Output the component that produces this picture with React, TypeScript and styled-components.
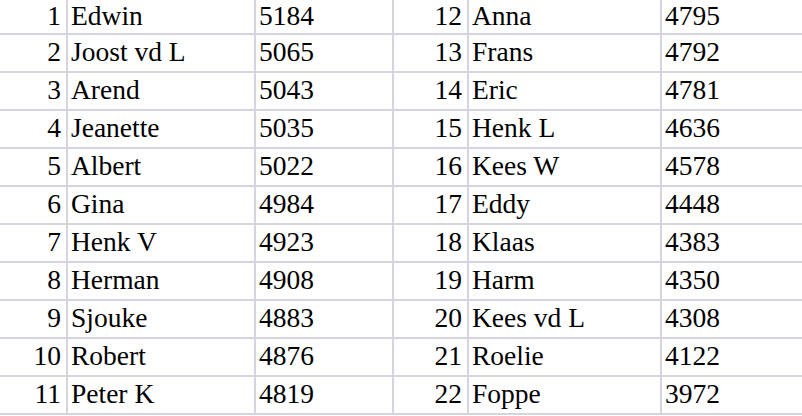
import React from "react";
import styled, { createGlobalStyle } from "styled-components";

const Global = createGlobalStyle`
  html, body { margin: 0; padding: 0; background: #ffffff; overflow: hidden; }
  body { font-family: "Liberation Serif", "Times New Roman", serif; color: #000; }
`;

const Sheet = styled.div`
  width: 802px;
  height: 416px;
  overflow: hidden;
  background: #fff;
`;

const Table = styled.div`
  display: flex;
  flex-direction: column;
`;

const Row = styled.div<{ $first?: boolean }>`
  display: grid;
  grid-template-columns: 68px 188px 138px 75px 193px 140px;
  height: ${(p) => (p.$first ? "35px" : "38px")};
`;

const Cell = styled.div<{ $align?: "left" | "right"; $last?: boolean; $first?: boolean }>`
  box-sizing: border-box;
  height: ${(p) => (p.$first ? "35px" : "38px")};
  border-bottom: 2px solid #d5d4df;
  border-right: ${(p) => (p.$last ? "none" : "2px solid #d5d4df")};
  font-size: 27.5px;
  line-height: ${(p) => (p.$first ? "32px" : "34px")};
  white-space: nowrap;
  text-align: ${(p) => (p.$align === "right" ? "right" : "left")};
  padding: ${(p) => (p.$align === "right" ? "0 5px 0 0" : "0 0 0 3px")};
`;

const left: [number, string, number][] = [
  [1, "Edwin", 5184],
  [2, "Joost vd L", 5065],
  [3, "Arend", 5043],
  [4, "Jeanette", 5035],
  [5, "Albert", 5022],
  [6, "Gina", 4984],
  [7, "Henk V", 4923],
  [8, "Herman", 4908],
  [9, "Sjouke", 4883],
  [10, "Robert", 4876],
  [11, "Peter K", 4819],
];

const right: [number, string, number][] = [
  [12, "Anna", 4795],
  [13, "Frans", 4792],
  [14, "Eric", 4781],
  [15, "Henk L", 4636],
  [16, "Kees W", 4578],
  [17, "Eddy", 4448],
  [18, "Klaas", 4383],
  [19, "Harm", 4350],
  [20, "Kees vd L", 4308],
  [21, "Roelie", 4122],
  [22, "Foppe", 3972],
];

export default function App() {
  return (
    <Sheet>
      <Global />
      <Table>
        {left.map((l, i) => {
          const r = right[i];
          const first = i === 0;
          return (
            <Row key={l[0]} $first={first}>
              <Cell $first={first} $align="right">{l[0]}</Cell>
              <Cell $first={first}>{l[1]}</Cell>
              <Cell $first={first}>{l[2]}</Cell>
              <Cell $first={first} $align="right">{r[0]}</Cell>
              <Cell $first={first}>{r[1]}</Cell>
              <Cell $first={first} $last>{r[2]}</Cell>
            </Row>
          );
        })}
      </Table>
    </Sheet>
  );
}
